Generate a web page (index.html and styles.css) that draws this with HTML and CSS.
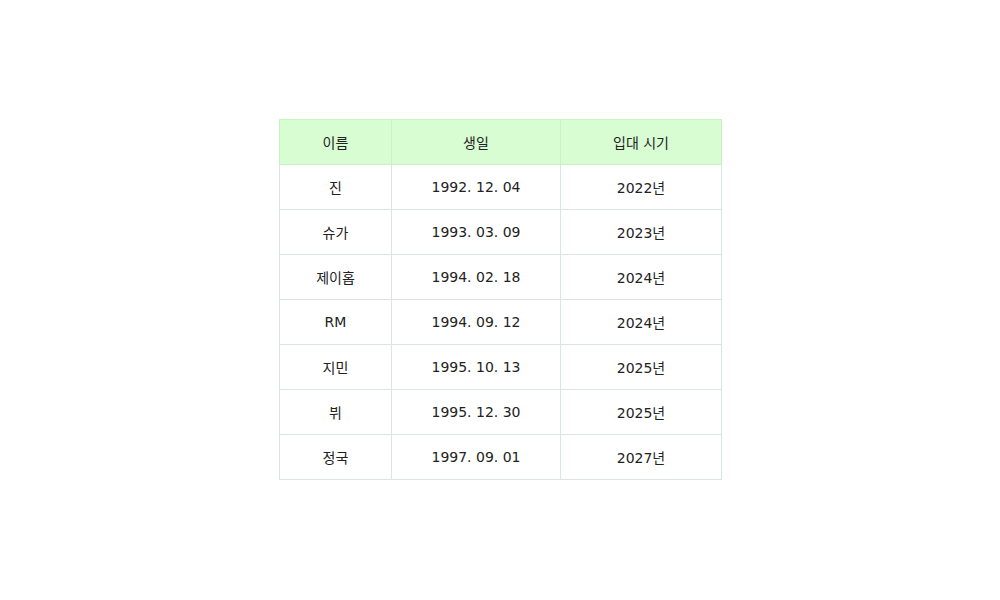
FILE: index.html
```html
<!DOCTYPE html>
<html lang="ko">
<head>
<meta charset="utf-8">
<link rel="stylesheet" href="styles.css">
</head>
<body>
<main class="page">
<table class="members">
<thead>
<tr><th class="c-name">이름</th><th class="c-birth">생일</th><th class="c-join">입대 시기</th></tr>
</thead>
<tbody>
<tr><td>진</td><td>1992. 12. 04</td><td>2022년</td></tr>
<tr><td>슈가</td><td>1993. 03. 09</td><td>2023년</td></tr>
<tr><td>제이홉</td><td>1994. 02. 18</td><td>2024년</td></tr>
<tr><td>RM</td><td>1994. 09. 12</td><td>2024년</td></tr>
<tr><td>지민</td><td>1995. 10. 13</td><td>2025년</td></tr>
<tr><td>뷔</td><td>1995. 12. 30</td><td>2025년</td></tr>
<tr><td>정국</td><td>1997. 09. 01</td><td>2027년</td></tr>
</tbody>
</table>
</main>
</body>
</html>
```
FILE: styles.css
```css
html, body { margin: 0; padding: 0; background: #fff; }
.page {
  width: 1000px;
  height: 600px;
  display: flex;
  justify-content: center;
  padding-top: 119px;
  padding-left: 1px;
  box-sizing: border-box;
}
.members {
  border-collapse: collapse;
  height: 361px;
  align-self: flex-start;
  font-family: "DejaVu Sans", "Noto Sans CJK KR", sans-serif;
  font-size: 14px;
  color: #222;
}
.members th, .members td {
  height: 43px;
  padding: 0 0 1px;
  text-align: center;
  vertical-align: middle;
  border: 1px solid #dbe4e4;
  font-weight: normal;
}
.members th {
  background: #d9fdd3;
  border-color: #c6f3bf;
}
.c-name { width: 111px; }
.c-birth { width: 168px; }
.c-join { width: 160px; }
```
